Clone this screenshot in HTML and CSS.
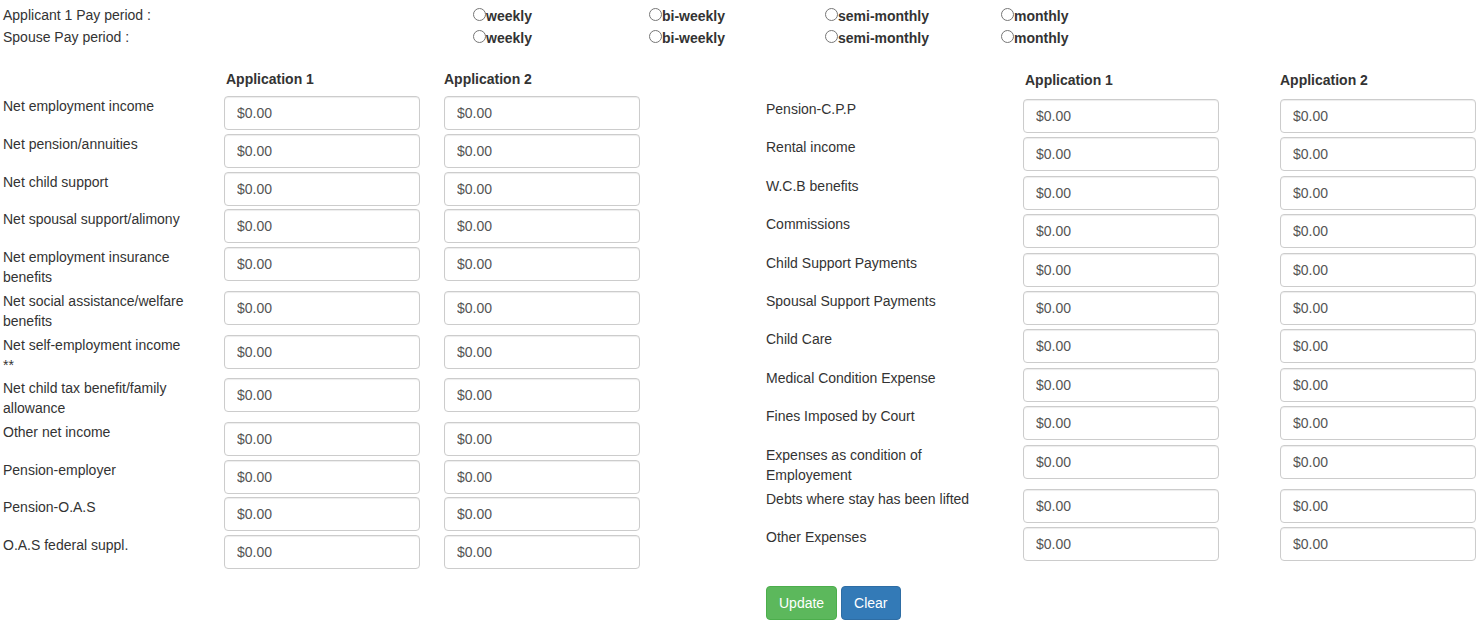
FILE: index.html
```html
<!DOCTYPE html>
<html lang="en">

<head>
  <meta charset="UTF-8">
  <meta name="viewport" content="width=device-width, initial-scale=1.0">
  <title>Income and expenses</title>
  <link rel="stylesheet" href="styles.css">
</head>

<body>
  <div class="pay">
    <div class="pay-row">
      <span class="pay-label">Applicant 1 Pay period :</span>
      <label class="radio"><input type="radio" name="pay1">weekly</label>
      <label class="radio"><input type="radio" name="pay1">bi-weekly</label>
      <label class="radio"><input type="radio" name="pay1">semi-monthly</label>
      <label class="radio"><input type="radio" name="pay1">monthly</label>
    </div>
    <div class="pay-row">
      <span class="pay-label">Spouse Pay period :</span>
      <label class="radio"><input type="radio" name="pay2">weekly</label>
      <label class="radio"><input type="radio" name="pay2">bi-weekly</label>
      <label class="radio"><input type="radio" name="pay2">semi-monthly</label>
      <label class="radio"><input type="radio" name="pay2">monthly</label>
    </div>
  </div>

  <div class="columns">
    <!-- income -->
    <div class="sheet sheet-left">
      <div></div>
      <div class="col-head col-head-first">Application 1</div>
      <div class="col-head">Application 2</div>

      <div class="row-label">Net employment income</div>
      <input class="amount" type="text" value="$0.00">
      <input class="amount" type="text" value="$0.00">

      <div class="row-label">Net pension/annuities</div>
      <input class="amount" type="text" value="$0.00">
      <input class="amount" type="text" value="$0.00">

      <div class="row-label">Net child support</div>
      <input class="amount" type="text" value="$0.00">
      <input class="amount" type="text" value="$0.00">

      <div class="row-label">Net spousal support/alimony</div>
      <input class="amount" type="text" value="$0.00">
      <input class="amount" type="text" value="$0.00">

      <div class="row-label">Net employment insurance benefits</div>
      <input class="amount" type="text" value="$0.00">
      <input class="amount" type="text" value="$0.00">

      <div class="row-label">Net social assistance/welfare benefits</div>
      <input class="amount" type="text" value="$0.00">
      <input class="amount" type="text" value="$0.00">

      <div class="row-label">Net self-employment income **</div>
      <input class="amount" type="text" value="$0.00">
      <input class="amount" type="text" value="$0.00">

      <div class="row-label">Net child tax benefit/family allowance</div>
      <input class="amount" type="text" value="$0.00">
      <input class="amount" type="text" value="$0.00">

      <div class="row-label">Other net income</div>
      <input class="amount" type="text" value="$0.00">
      <input class="amount" type="text" value="$0.00">

      <div class="row-label">Pension-employer</div>
      <input class="amount" type="text" value="$0.00">
      <input class="amount" type="text" value="$0.00">

      <div class="row-label">Pension-O.A.S</div>
      <input class="amount" type="text" value="$0.00">
      <input class="amount" type="text" value="$0.00">

      <div class="row-label">O.A.S federal suppl.</div>
      <input class="amount" type="text" value="$0.00">
      <input class="amount" type="text" value="$0.00">
    </div>

    <!-- other income / expenses -->
    <div class="right-block">
      <div class="sheet sheet-right">
        <div></div>
        <div class="col-head col-head-first">Application 1</div>
        <div class="col-head">Application 2</div>

        <div class="row-label">Pension-C.P.P</div>
        <input class="amount" type="text" value="$0.00">
        <input class="amount" type="text" value="$0.00">

        <div class="row-label">Rental income</div>
        <input class="amount" type="text" value="$0.00">
        <input class="amount" type="text" value="$0.00">

        <div class="row-label">W.C.B benefits</div>
        <input class="amount" type="text" value="$0.00">
        <input class="amount" type="text" value="$0.00">

        <div class="row-label">Commissions</div>
        <input class="amount" type="text" value="$0.00">
        <input class="amount" type="text" value="$0.00">

        <div class="row-label">Child Support Payments</div>
        <input class="amount" type="text" value="$0.00">
        <input class="amount" type="text" value="$0.00">

        <div class="row-label">Spousal Support Payments</div>
        <input class="amount" type="text" value="$0.00">
        <input class="amount" type="text" value="$0.00">

        <div class="row-label">Child Care</div>
        <input class="amount" type="text" value="$0.00">
        <input class="amount" type="text" value="$0.00">

        <div class="row-label">Medical Condition Expense</div>
        <input class="amount" type="text" value="$0.00">
        <input class="amount" type="text" value="$0.00">

        <div class="row-label">Fines Imposed by Court</div>
        <input class="amount" type="text" value="$0.00">
        <input class="amount" type="text" value="$0.00">

        <div class="row-label">Expenses as condition of Employement</div>
        <input class="amount" type="text" value="$0.00">
        <input class="amount" type="text" value="$0.00">

        <div class="row-label">Debts where stay has been lifted</div>
        <input class="amount" type="text" value="$0.00">
        <input class="amount" type="text" value="$0.00">

        <div class="row-label">Other Expenses</div>
        <input class="amount" type="text" value="$0.00">
        <input class="amount" type="text" value="$0.00">
      </div>

      <div class="actions">
        <button class="btn btn-update">Update</button>
        <button class="btn btn-clear">Clear</button>
      </div>
    </div>
  </div>
</body>

</html>
```

FILE: styles.css
```css
body {
  font-family: "Liberation Sans", Arial, sans-serif;
  font-size: 14px;
  line-height: 20px;
  color: #333;
  background-color: #fff;
  margin: 0;
}

.pay {
  padding: 4px 0 0 3px;
}

.pay-row {
  display: grid;
  grid-template-columns: 470px repeat(4, 176px);
  grid-auto-rows: 22px;
  line-height: 22px;
}

.radio {
  padding-top: 1px;
  font-weight: bold;
  white-space: nowrap;
}

.radio input {
  margin: 0;
  width: 13px;
  height: 13px;
  vertical-align: 0;
}

.columns {
  display: flex;
  align-items: flex-start;
  margin-top: 21px;
}

.sheet {
  display: grid;
  align-items: start;
}

.sheet-left {
  margin-left: 3px;
  grid-template-columns: 197px 196px 196px;
  column-gap: 24px;
  row-gap: 3.73px;
}

.sheet-left .row-label {
  padding-right: 7px;
}

.right-block {
  margin-left: 126px;
  padding-top: 1px;
}

.sheet-right {
  grid-template-columns: 257px 257px 196px;
  row-gap: 4.4px;
}

.sheet-right .row-label {
  padding-right: 27px;
}

.col-head {
  font-weight: bold;
  padding: 0 0 3.5px 0;
}

.col-head-first {
  padding-left: 2px;
}

.sheet-right .col-head {
  padding-bottom: 4.7px;
}

.amount {
  display: block;
  width: 196px;
  height: 34px;
  box-sizing: border-box;
  padding: 6px 12px;
  font-family: inherit;
  font-size: 14px;
  color: #555;
  background-color: #fff;
  border: 1px solid #ccc;
  border-radius: 4px;
  box-shadow: inset 0 1px 1px rgba(0, 0, 0, 0.075);
}

.actions {
  margin-top: 25px;
}

.btn {
  display: inline-block;
  padding: 6px 12px;
  font-family: inherit;
  font-size: 14px;
  line-height: 20px;
  color: #fff;
  border: 1px solid transparent;
  border-radius: 4px;
  cursor: pointer;
}

.btn-update {
  background-color: #5cb85c;
  border-color: #4cae4c;
}

.btn-clear {
  background-color: #337ab7;
  border-color: #2e6da4;
}
```
